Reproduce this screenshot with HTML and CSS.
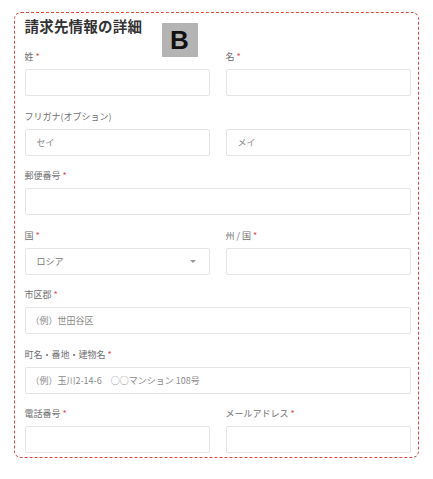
FILE: index.html
```html
<!DOCTYPE html>
<html lang="ja">
<head>
<meta charset="utf-8">
<link rel="stylesheet" href="styles.css">
</head>
<body>
<div class="page">
  <section class="box">
    <h2 class="title">請求先情報の詳細</h2>
    <div class="badge">B</div>
    <div class="grid">
      <div class="field"><div class="label">姓<span class="req">*</span></div><div class="input"></div></div>
      <div class="field"><div class="label">名<span class="req">*</span></div><div class="input"></div></div>
      <div class="field"><div class="label">フリガナ(オプション)</div><div class="input"><span class="ph">セイ</span></div></div>
      <div class="field"><div class="label">&nbsp;</div><div class="input"><span class="ph">メイ</span></div></div>
      <div class="field full"><div class="label">郵便番号<span class="req">*</span></div><div class="input"></div></div>
      <div class="field"><div class="label">国<span class="req">*</span></div><div class="input select"><span class="val">ロシア</span><span class="caret"></span></div></div>
      <div class="field"><div class="label">州 / 国<span class="req">*</span></div><div class="input"></div></div>
      <div class="field full"><div class="label">市区郡<span class="req">*</span></div><div class="input"><span class="ph ex">（例）世田谷区</span></div></div>
      <div class="field full"><div class="label">町名・番地・建物名<span class="req">*</span></div><div class="input"><span class="ph ex">（例）玉川2-14-6　○○マンション 108号</span></div></div>
      <div class="field"><div class="label">電話番号<span class="req">*</span></div><div class="input"></div></div>
      <div class="field"><div class="label">メールアドレス<span class="req">*</span></div><div class="input"></div></div>
    </div>
  </section>
</div>
</body>
</html>
```
FILE: styles.css
```css
* { box-sizing: border-box; }
html, body {
  margin: 0;
  padding: 0;
  background: #ffffff;
  font-family: "Noto Sans CJK JP", "Noto Sans", sans-serif;
}
.page {
  padding: 12px 14px 0 14px;
  width: 433px;
}
.box {
  position: relative;
  width: 405px;
  height: 446px;
  border: 1.5px dashed #d9493f;
  border-radius: 7px;
  padding: 3px 7px 0 9.5px;
}
.title {
  margin: 0;
  font-size: 14.5px;
  line-height: 20px;
  font-weight: 700;
  color: #333333;
  letter-spacing: 0.2px;
}
.badge {
  position: absolute;
  left: 146.5px;
  top: 9.5px;
  width: 36px;
  height: 34px;
  background: #b4b4b4;
  color: #111111;
  font-family: "Liberation Sans", Arial, sans-serif;
  font-weight: 700;
  font-size: 26px;
  line-height: 34px;
  text-align: center;
}
.grid {
  margin-top: 15px;
  display: grid;
  grid-template-columns: 185px 185px;
  column-gap: 16px;
  row-gap: 14.5px;
}
.full { grid-column: 1 / span 2; }
.label {
  font-size: 9px;
  line-height: 12px;
  height: 12px;
  color: #6f6f6f;
  margin-bottom: 6px;
  white-space: nowrap;
}
.req {
  color: #e0504a;
  margin-left: 2px;
}
.input {
  height: 27px;
  border: 1px solid #e4e4e4;
  border-radius: 2px;
  background: #ffffff;
  display: flex;
  align-items: center;
  padding: 0 11px;
  font-size: 9px;
  color: #8a8a8a;
}
.ph.ex { margin-left: -6px; }
.select { justify-content: space-between; }
.val { color: #777777; }
.caret {
  width: 0;
  height: 0;
  border-left: 3px solid transparent;
  border-right: 3px solid transparent;
  border-top: 3px solid #999999;
  margin-right: 2px;
}
```
